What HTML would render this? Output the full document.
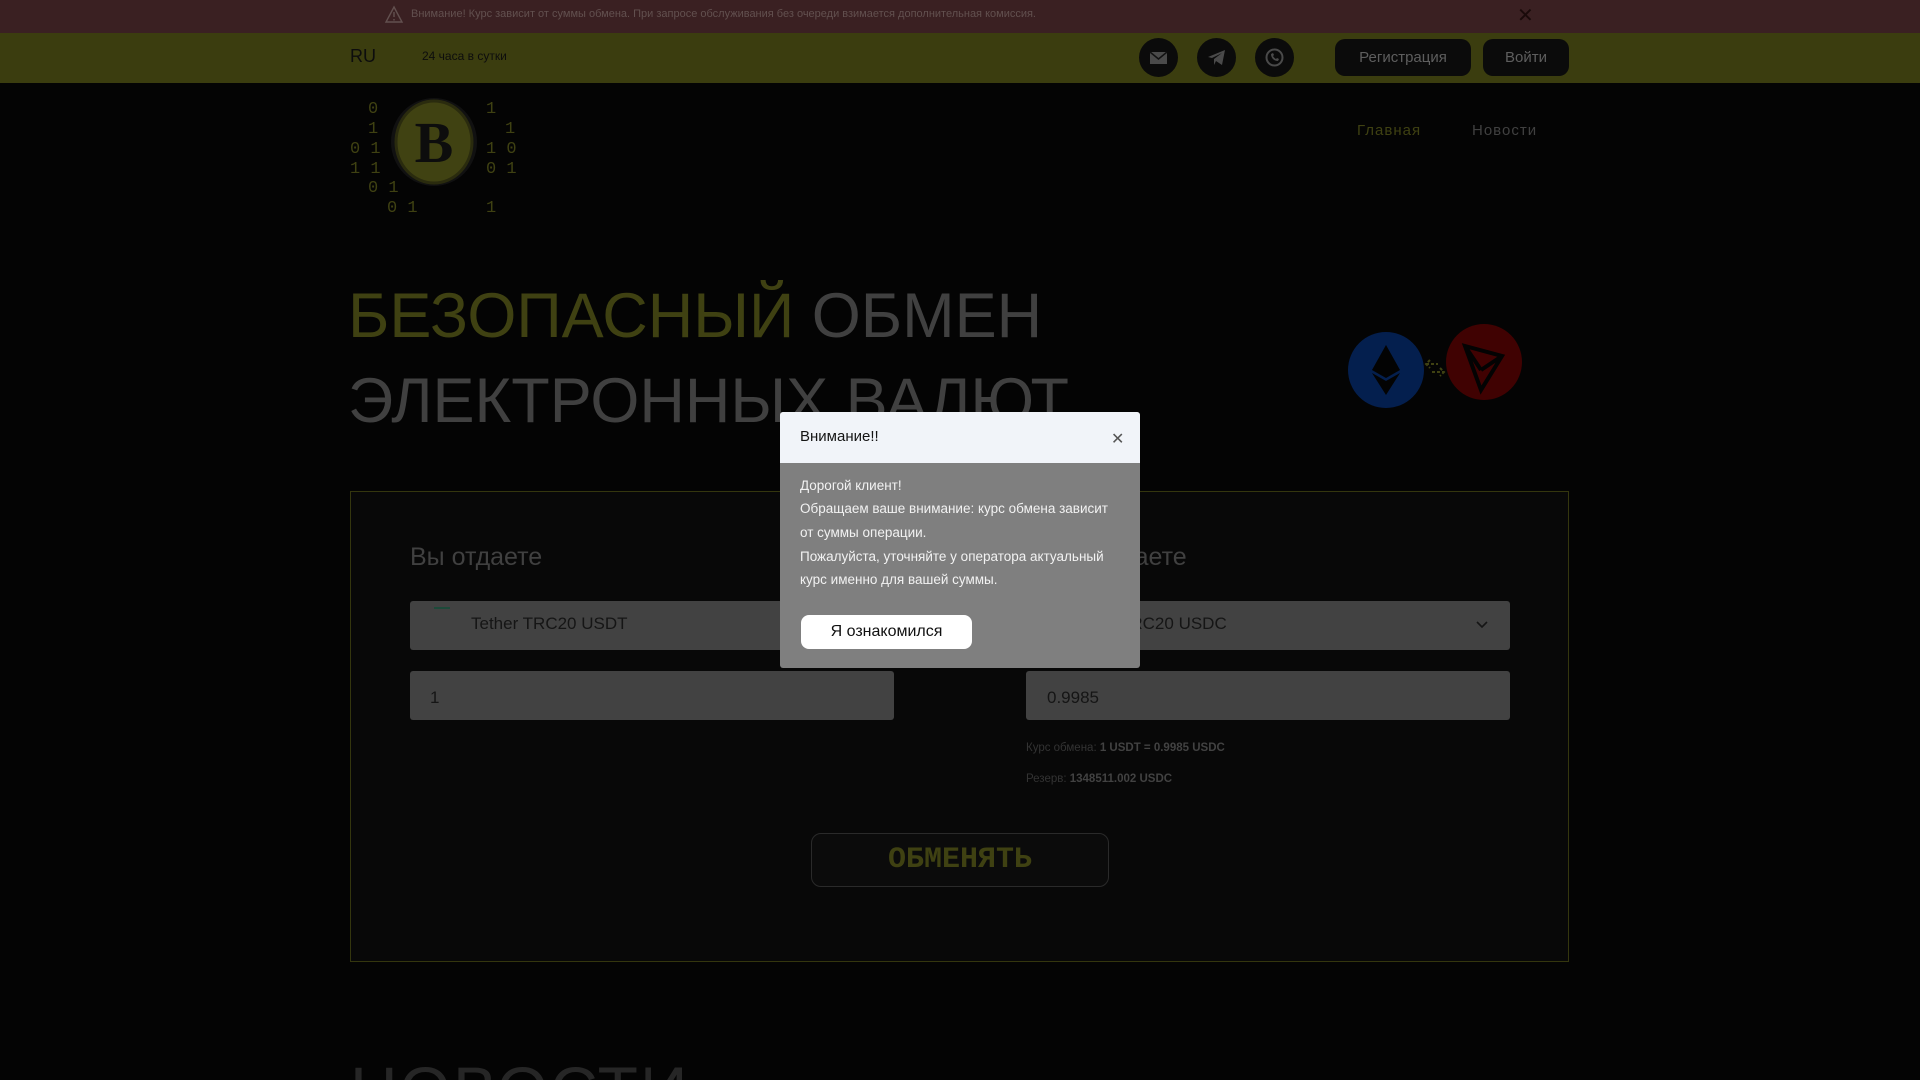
<!DOCTYPE html>
<html style="width:1920px;height:1080px;overflow:hidden"><head><meta charset="utf-8"><style>
*{margin:0;padding:0;box-sizing:border-box}
body{width:1920px;height:1080px;background:#040404;font-family:"Liberation Sans",sans-serif;position:relative;overflow:hidden}
#w{position:absolute;left:0;top:0;width:1920px;height:1080px;overflow:hidden}
.a{position:absolute;white-space:nowrap}
.top{left:0;top:0;width:1920px;height:33px;background:#3a2022}
.yb{left:0;top:33px;width:1920px;height:50px;background:#3b3d0f}
.ic{width:39px;height:39px;border-radius:50%;background:#0b0b0b;top:38px}
.btn{background:#0b0b0b;color:#5e5e5e;font-size:15px;top:39px;height:37px;line-height:37px;text-align:center;border-radius:10px}
.h{font-size:63px;line-height:86px;color:#404040;left:348px}
.sel{background:#424242;border-radius:3px;height:49px}
.lbl{font-size:25px;color:#404040}
.t{color:#151515;font-size:17px}
.modal{left:780px;top:412px;width:360px;height:256px;background:#7f7f7f;border-radius:3px;overflow:hidden}
.mh{position:absolute;left:0;top:0;width:360px;height:51px;background:#f1f4f9}
.mt{position:absolute;left:20px;font-size:13.5px;color:#f2f2f2}
</style></head><body><div id="w">
<div class="a top"></div>
<svg class="a" style="left:384px;top:5px" width="20" height="20" viewBox="0 0 20 20"><path d="M10 2L18 17H2Z" fill="none" stroke="#62504f" stroke-width="1.4"/><path d="M10 7v5M10 14v1.5" stroke="#62504f" stroke-width="1.4"/></svg>
<div class="a" style="left:411px;top:8px;font-size:11px;color:#62504f">Внимание! Курс зависит от суммы обмена. При запросе обслуживания без очереди взимается дополнительная комиссия.</div>
<div class="a" style="left:1517px;top:3px;font-size:20px;color:#1a0a0a">✕</div>
<div class="a yb"></div>
<div class="a" style="left:350px;top:46px;font-size:18px;color:#0d0d0d">RU</div>
<div class="a" style="left:422px;top:49px;font-size:12px;color:#0d0d0d">24 часа в сутки</div>
<div class="a ic" style="left:1139px"></div>
<div class="a ic" style="left:1197px"></div>
<div class="a ic" style="left:1255px"></div>
<svg class="a" style="left:1148px;top:48px" width="21" height="19" viewBox="0 0 21 19"><rect x="2" y="4" width="17" height="12" fill="#4a4a4a"/><path d="M2 4l8.5 7L19 4" stroke="#111" fill="none" stroke-width="1.5"/></svg>
<svg class="a" style="left:1206px;top:47px" width="21" height="21" viewBox="0 0 21 21"><path d="M2 10L19 3L16 18L10 14L8 18L8 12L16 6L6 11Z" fill="#4a4a4a"/></svg>
<svg class="a" style="left:1264px;top:47px" width="21" height="21" viewBox="0 0 21 21"><circle cx="10.5" cy="10.5" r="8" fill="none" stroke="#4a4a4a" stroke-width="2"/><path d="M7 7c0 4 3 7 7 7l1-2-2-1-1 1c-1-.5-2.5-2-3-3l1-1-1-2z" fill="#4a4a4a"/></svg>
<div class="a btn" style="left:1335px;width:136px">Регистрация</div>
<div class="a btn" style="left:1483px;width:86px">Войти</div>
<svg class="a" style="left:350px;top:98px" width="170" height="118" viewBox="0 0 170 118">
<g font-family="Liberation Mono,monospace" font-size="17" fill="#3f4112">
<text x="18" y="15">0</text><text x="136" y="15">1</text>
<text x="18" y="35">1</text><text x="155" y="35">1</text>
<text x="0" y="55">0 1</text><text x="136" y="55">1 0</text>
<text x="0" y="75">1 1</text><text x="136" y="75">0 1</text>
<text x="18" y="94">0 1</text>
<text x="37" y="114">0 1</text><text x="136" y="114">1</text></g>
<ellipse cx="84" cy="44" rx="43" ry="44" fill="#111"/>
<ellipse cx="84" cy="44" rx="38" ry="41" fill="#404212" stroke="#2a2b0e" stroke-width="3"/>
<text x="84" y="64" font-family="Liberation Serif,serif" font-weight="bold" font-size="58" text-anchor="middle" fill="#0d0d0d">B</text>
</svg>
<div class="a" style="left:1357px;top:122px;font-size:15px;color:#3f4112;letter-spacing:1px">Главная</div>
<div class="a" style="left:1472px;top:122px;font-size:15px;color:#404040;letter-spacing:1px">Новости</div>
<div class="a h" style="top:273px"><span style="color:#3f4112">БЕЗОПАСНЫЙ</span> ОБМЕН</div>
<div class="a h" style="top:358px">ЭЛЕКТРОННЫХ ВАЛЮТ</div>
<svg class="a" style="left:1340px;top:320px" width="190" height="100" viewBox="0 0 190 100">
<circle cx="46" cy="50" r="38" fill="#041f4e"/>
<path d="M46 25L60 50L46 58L32 50Z M32 53L46 61L60 53L46 75Z" fill="#030303"/>
<circle cx="144" cy="42" r="38" fill="#400202"/>
<path d="M125 26L162 36L141 70Z M125 26L141 70M141 50L162 36M141 50L125 26" fill="none" stroke="#030303" stroke-width="4"/>
<path d="M86 44h12M90 40l-4 4 4 4M92 52h12M100 48l4 4-4 4" stroke="#3f4112" stroke-width="2" fill="none" stroke-dasharray="3 2"/>
</svg>
<div class="a" style="left:350px;top:491px;width:1219px;height:471px;border:1px solid #34360e;background:#080808"></div>
<div class="a lbl" style="left:410px;top:543px">Вы отдаете</div>
<div class="a lbl" style="left:1026px;top:543px">Вы получаете</div>
<div class="a sel" style="left:410px;top:601px;width:484px"></div>
<div class="a" style="left:434px;top:607px;width:16px;height:2px;background:#1d4a3a"></div>
<div class="a t" style="left:471px;top:614px">Tether TRC20 USDT</div>
<div class="a sel" style="left:1026px;top:601px;width:484px"></div>
<div class="a t" style="left:1040px;top:614px">USD Coin TRC20 USDC</div>
<svg class="a" style="left:1476px;top:620px" width="12" height="10"><path d="M1 2l5 5 5-5" stroke="#151515" stroke-width="1.6" fill="none"/></svg>
<div class="a sel" style="left:410px;top:671px;width:484px"></div>
<div class="a t" style="left:430px;top:688px">1</div>
<div class="a sel" style="left:1026px;top:671px;width:484px"></div>
<div class="a t" style="left:1047px;top:688px">0.9985</div>
<div class="a" style="left:1026px;top:742px;font-size:11.5px;color:#333">Курс обмена: <b style="color:#424242">1 USDT = 0.9985 USDC</b></div>
<div class="a" style="left:1026px;top:773px;font-size:11.5px;color:#333">Резерв: <b style="color:#424242">1348511.002 USDC</b></div>
<div class="a" style="left:811px;top:833px;width:298px;height:54px;border:1px solid #2a2a2a;border-radius:10px;background:#0b0b0b;color:#3f4112;font-family:'Liberation Mono',monospace;font-size:30px;text-align:center;line-height:52px;font-weight:bold">ОБМЕНЯТЬ</div>
<div class="a" style="left:350px;top:1052px;font-size:66px;color:#262626;letter-spacing:2px">НОВОСТИ</div>
<div class="a modal">
<div class="mh"></div>
<div class="mt" style="top:16px;color:#151515;font-size:15px">Внимание!!</div>
<div class="mt" style="left:331px;top:17px;color:#555;font-size:16px">✕</div>
<div class="mt" style="top:66px">Дорогой клиент!</div>
<div class="mt" style="top:89px">Обращаем ваше внимание: курс обмена зависит</div>
<div class="mt" style="top:113px">от суммы операции.</div>
<div class="mt" style="top:137px">Пожалуйста, уточняйте у оператора актуальный</div>
<div class="mt" style="top:160px">курс именно для вашей суммы.</div>
<div style="position:absolute;left:21px;top:203px;width:171px;height:34px;background:#fff;border-radius:8px;color:#111;font-size:16px;text-align:center;line-height:34px">Я ознакомился</div>
</div>
</div></body></html>
